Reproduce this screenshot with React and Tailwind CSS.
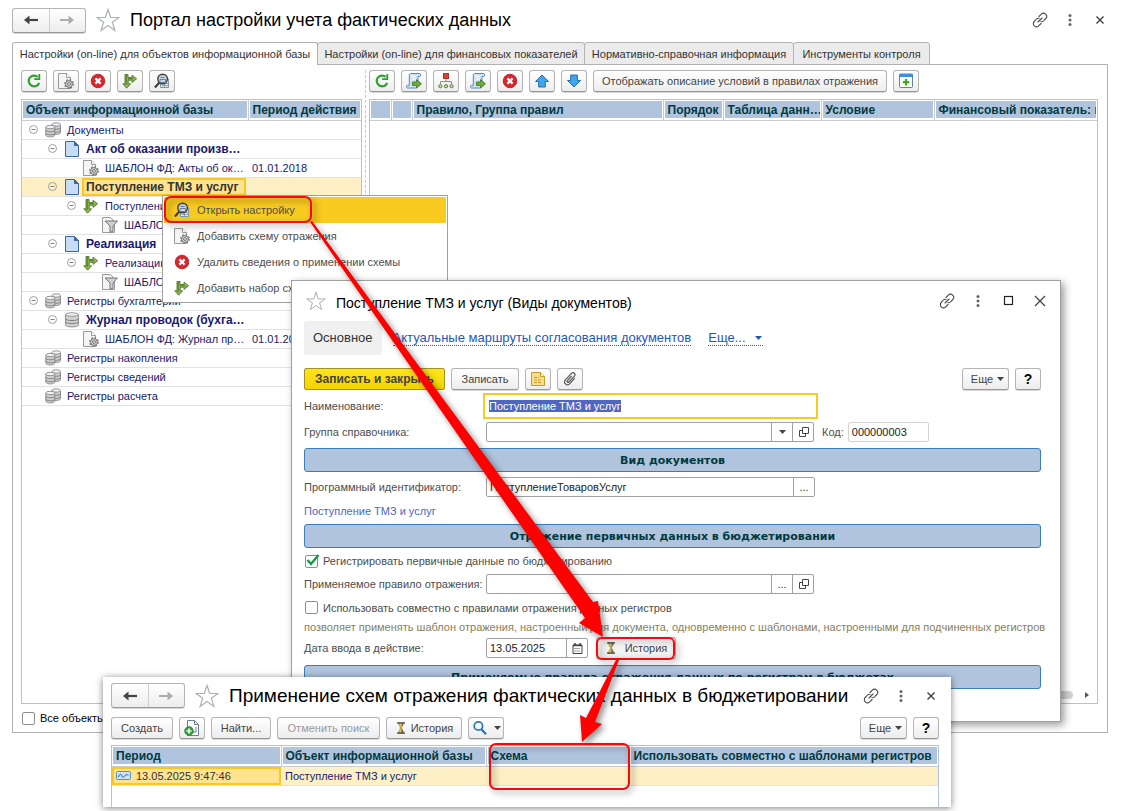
import { useEffect, useRef } from "react";
import clsx from "clsx";

// ---------- icons ----------

function Icon({ size = 16, children, className }) {
  return (
    <svg
      width={size}
      height={size}
      viewBox="0 0 16 16"
      fill="none"
      aria-hidden="true"
      className={clsx("shrink-0", className)}
    >
      {children}
    </svg>
  );
}

const RefreshIcon = () => (
  <Icon>
    <path d="M13.2 9.8A5.400 5.400 0 1 1 11.600 3.800" stroke="#2fa02f" strokeWidth="2.200" />
    <path d="M14.200 1v6H8.200V5.200h4.200V1z" fill="#2fa02f" />
  </Icon>
);

const PageGearIcon = () => (
  <Icon>
    <path d="M.5.5h8l4 4v11H.5z" fill="#f4f4f4" stroke="#9a9a9a" />
    <path d="M8.5.5v4h4" fill="#fff" stroke="#9a9a9a" />
    <circle cx="11" cy="11" r="4.2" stroke="#6f6f6f" strokeWidth="1.4" strokeDasharray="1.700 1.600" />
    <circle cx="11" cy="11" r="3.4" fill="#d8d8d8" stroke="#777" />
    <circle cx="11" cy="11" r="1.4" fill="#fff" stroke="#6f6f6f" />
  </Icon>
);

const DeleteIcon = () => (
  <Icon>
    <circle cx="8" cy="8" r="6.8" fill="#d8262c" stroke="#b0161c" strokeWidth=".8" />
    <path d="M5.4 5.4l5.2 5.2M10.6 5.4l-5.2 5.2" stroke="#fff" strokeWidth="2.2" />
  </Icon>
);

const BranchIcon = () => (
  <Icon>
    <path
      d="M3 1.5h3v3h4V2.2l4.6 3.6L10 9.4V7.2H6.2v3.6h2.4L4.6 15.2.8 10.8H3z"
      fill="#8fb356"
      stroke="#4f7a26"
      strokeWidth=".9"
      strokeLinejoin="round"
    />
    <path d="M4.2 1v11M6 5.8h5" stroke="#4f7a26" />
  </Icon>
);

const LensPageIcon = () => (
  <Icon>
    <path d="M8 6h6.5v8.5H6.5V12z" fill="#dfe7f0" stroke="#8393a6" />
    <path d="M8 10.500h6M8 12.500h6M10.500 9v5" stroke="#8393a6" strokeWidth=".8" />
    <circle cx="8.6" cy="6" r="4.8" fill="#c6d6e6" stroke="#3e3e3e" strokeWidth="1.4" />
    <path d="M6 6.500h5.500v3h-5.500zM6.500 4.500h4" stroke="#6d8196" />
    <path d="M5.4 9.4L.9 14.4" stroke="#3e3e3e" strokeWidth="2.2" />
  </Icon>
);

const ScrollIcon = () => (
  <Icon>
    <path d="M4.5.5h9c1.6 0 1.6 3 0 3H12V12c0 2-1.2 3-2.500 3H1.5c-1.6 0-1.6-2.6 0-2.6h1.8V2.2C3.3 1.2 3.8.5 4.5.5z" fill="#cfe3f8" stroke="#5d87b5" />
    <path d="M5.6 3.500h4.6M5.6 6h4.6" stroke="#fff" strokeWidth="1.2" />
    <path d="M6.500 9h4V6.6l5 4.2-5 4.200v-2.600h-4z" fill="#6fab3c" stroke="#3b7418" strokeWidth=".8" />
  </Icon>
);

const TreeIcon = () => (
  <Icon>
    <path d="M8 5v4M2.5 11V8.6h11V11" stroke="#8a8a8a" />
    <rect x="5.400" y=".6" width="5.200" height="4.800" fill="#d8432c" stroke="#9a2114" strokeWidth=".8" />
    <circle cx="2.4" cy="13.2" r="1.6" fill="#d7e8bd" stroke="#4f7a26" />
    <circle cx="8" cy="13.2" r="1.6" fill="#d7e8bd" stroke="#4f7a26" />
    <circle cx="13.6" cy="13.2" r="1.6" fill="#d7e8bd" stroke="#4f7a26" />
  </Icon>
);

const UpIcon = () => (
  <Icon>
    <path d="M8 2l6.5 6.5h-3.2V14H4.7V8.5H1.5z" fill="#3ea6ea" stroke="#2271ad" strokeLinejoin="round" />
  </Icon>
);

const DownIcon = () => (
  <Icon>
    <path d="M8 14l6.5-6.5h-3.2V2H4.7v5.5H1.5z" fill="#3ea6ea" stroke="#2271ad" strokeLinejoin="round" />
  </Icon>
);

const AddPanelIcon = () => (
  <Icon>
    <rect x="1.5" y="1" width="13" height="13.5" rx="1" fill="#fff" stroke="#6c7f94" />
    <path d="M1 1h14v3H1z" fill="#3f8fdc" />
    <path d="M8 6v6.4M4.8 9.2h6.4" stroke="#3fae16" strokeWidth="2.2" />
  </Icon>
);

const PageIcon = () => (
  <Icon>
    <path d="M1.5.5h9l4 4v11h-13z" fill="#c7dcf5" stroke="#3b67a5" />
    <path d="M10.5.5v4h4z" fill="#3b67a5" stroke="#3b67a5" />
  </Icon>
);

const Cylinder = ({ x, y, w, h }) => (
  <g stroke="#8a8a8a" strokeWidth=".9">
    <path d={`M${x} ${y + 2}v${h - 4}c0 2.6 ${w} 2.6 ${w} 0v${4 - h}`} fill="#cfcfcf" />
    <path d={`M${x} ${y + h / 2 - 1}c0 2.4 ${w} 2.4 ${w} 0M${x} ${y + h / 2 + 2}c0 2.4 ${w} 2.4 ${w} 0`} stroke="#777" />
    <ellipse cx={x + w / 2} cy={y + 2} rx={w / 2} ry="1.7" fill="#f2f2f2" />
  </g>
);

const StackIcon = () => (
  <Icon>
    <Cylinder x={7} y={0.5} w={8.5} h={12} />
    <Cylinder x={0.8} y={3} w={9} h={12} />
  </Icon>
);

const DatabaseIcon = () => (
  <Icon>
    <Cylinder x={1.5} y={0.5} w={13} h={14.5} />
  </Icon>
);

const FilterPageIcon = () => (
  <Icon>
    <path d="M.5.5h8l4 4v11H.5z" fill="#f4f4f4" stroke="#9a9a9a" />
    <path d="M3 4h12.5L11 9v5.4l-3 .8V9z" fill="#cfcfcf" stroke="#777" strokeLinejoin="round" />
  </Icon>
);

const NoteIcon = () => (
  <Icon>
    <path d="M1.500 1.500h9l4 4v9h-13z" fill="#f9dd8a" stroke="#c79a2c" />
    <path d="M10.500 1.500v4h4" fill="#fff3c8" stroke="#c79a2c" />
    <path d="M4 6.500h5M4 9h8M4 11.500h8" stroke="#c79a2c" strokeDasharray="3 1" />
  </Icon>
);

const ClipIcon = () => (
  <Icon>
    <path
      d="M12.8 7.2l-5.2 5.6a2.9 2.9 0 0 1-4.2-4l6-6.4a2 2 0 0 1 3 2.8L6.9 11a1 1 0 0 1-1.5-1.4l4.2-4.6"
      stroke="#5a5a5a"
      strokeWidth="1.2"
    />
  </Icon>
);

const HourglassIcon = ({ className }) => (
  <Icon size={12} className={className}>
    <path d="M3 1.2h10M3 14.8h10" stroke="#333" strokeWidth="2" />
    <path d="M4.500 2h7L8.600 8l2.900 6h-7l2.900-6z" fill="#f0c020" stroke="#6d6d6d" strokeWidth=".7" />
    <path d="M9 8l2.600 6H8.400zM11.400 2L9 7V2z" fill="#56616b" />
  </Icon>
);

const SearchIcon = () => (
  <Icon>
    <circle cx="6.4" cy="6" r="4.2" stroke="#2f78b7" strokeWidth="1.8" />
    <path d="M9.4 9.2l4.6 5" stroke="#2f78b7" strokeWidth="2.4" />
  </Icon>
);

const NewPageIcon = () => (
  <Icon>
    <path d="M3.5.5h7l4 4v11h-11z" fill="#fff" stroke="#6c7f94" />
    <path d="M10.5.5v4h4M9 12h3V7" stroke="#6c7f94" />
    <circle cx="5" cy="11" r="4.4" fill="#2fa03a" stroke="#1c7d28" strokeWidth=".6" />
    <path d="M5 8.5v5M2.5 11h5" stroke="#fff" strokeWidth="1.6" />
  </Icon>
);

const RecordIcon = () => (
  <svg width="15" height="9" viewBox="0 0 15 9" fill="none" aria-hidden="true" className="shrink-0">
    <rect x=".5" y=".5" width="14" height="8" rx="1" fill="#cfe3f7" stroke="#5b8dc0" />
    <path d="M2.500 6c1-3.500 2.500-3.500 3.500-1s2 1 3-.5 2-.5 3.500-.5" stroke="#1f5aa0" />
  </svg>
);

const StarIcon = ({ size = 24 }) => (
  <svg width={size} height={size} viewBox="0 0 24 24" fill="none" aria-hidden="true" className="shrink-0">
    <path
      d="M12 1.500l2.700 8h8.300l-6.700 4.800 2.600 8.100L12 17.500l-6.900 4.900 2.600-8.100L1 9.500h8.300z"
      stroke="#a9b1ba"
      strokeWidth="1.200"
    />
  </svg>
);

const LinkIcon = () => (
  <Icon>
    <g stroke="#4a4a4a" strokeWidth="1.100" strokeLinecap="round">
      <path d="M7 4.500l2.300-2.300a3 3 0 0 1 4.500 4.300L11.500 9a2.600 2.600 0 0 1-2.600.7" />
      <path d="M9 11.500l-2.300 2.300a3 3 0 0 1-4.500-4.300L4.500 7a2.600 2.600 0 0 1 2.600-.7" />
      <path d="M6 10l4-4" />
    </g>
  </Icon>
);

const DotsIcon = () => (
  <Icon>
    <g fill="#666">
      <circle cx="8" cy="3.500" r="1.500" />
      <circle cx="8" cy="8" r="1.500" />
      <circle cx="8" cy="12.500" r="1.500" />
    </g>
  </Icon>
);

const CloseIcon = ({ big }) => (
  <Icon>
    <path
      d={big ? "M3 3l10 10M13 3L3 13" : "M4.500 4.500l7 7M11.500 4.500l-7 7"}
      stroke="#3f3f3f"
      strokeWidth={big ? 1.2 : 1.4}
    />
  </Icon>
);

const MaximizeIcon = () => (
  <Icon>
    <rect x="3.500" y="3.500" width="8" height="8" stroke="#222" strokeWidth="1.200" />
  </Icon>
);

const OpenIcon = () => (
  <svg width="11" height="11" viewBox="0 0 11 11" fill="none" aria-hidden="true">
    <path d="M4.500.5h6v6h-6zM4.500 3.500h-3v6h6v-3" stroke="#444" />
  </svg>
);

const CalendarIcon = () => (
  <svg width="11" height="11" viewBox="0 0 11 11" fill="none" aria-hidden="true">
    <path d="M1 2h9v8.500H1z" stroke="#444" />
    <path d="M1 2.500h9M3 0v2M8 0v2" stroke="#444" strokeWidth="1.500" />
    <path d="M2.500 5.500h6M2.500 8h6" stroke="#444" strokeDasharray="1 1" />
  </svg>
);

const Caret = ({ className = "text-[#444]" }) => (
  <svg width="7" height="4" viewBox="0 0 7 4" aria-hidden="true" className={className}>
    <path d="M0 0h7L3.500 4z" fill="currentColor" />
  </svg>
);

// ---------- shared controls ----------

function Button({ children, className, label, disabled }) {
  return (
    <button
      type="button"
      aria-label={label}
      disabled={disabled}
      className={clsx(
        "flex h-[22px] shrink-0 items-center justify-center rounded-[3px] border border-[#b4b4b4] border-b-[#989898] bg-linear-to-b from-white to-[#ededed] whitespace-nowrap shadow-[0_1px_0_#d8d8d8]",
        disabled ? "text-[#9a9a9a]" : "text-[#444]",
        className
      )}
    >
      {children}
    </button>
  );
}

const IconButton = ({ label, children, className }) => (
  <Button label={label} className={clsx("w-[26px]", className)}>
    {children}
  </Button>
);

function NavButtons() {
  return (
    <div className="flex h-[25px] w-[74px] shrink-0 rounded-[3px] border border-[#b4b4b4] border-b-[#989898] bg-linear-to-b from-white to-[#ededed] shadow-[0_1px_0_#d8d8d8]">
      <button type="button" aria-label="Назад" className="flex flex-1 items-center justify-center border-r border-[#cfcfcf]">
        <Icon>
          <path d="M15 8H4" stroke="#444" strokeWidth="2.200" />
          <path d="M1 8l5.500-4.500v9z" fill="#444" />
        </Icon>
      </button>
      <button type="button" aria-label="Вперед" className="flex flex-1 items-center justify-center">
        <Icon>
          <path d="M1 8h11" stroke="#adadad" strokeWidth="2" />
          <path d="M15 8L9.500 3.500v9z" fill="#adadad" />
        </Icon>
      </button>
    </div>
  );
}

function WindowButtons({ maximize }) {
  return (
    <div className={clsx("ml-auto flex shrink-0", maximize ? "gap-[15px]" : "gap-[14px]")}>
      <button type="button" aria-label="Ссылка"><LinkIcon /></button>
      <button type="button" aria-label="Меню окна"><DotsIcon /></button>
      {maximize && <button type="button" aria-label="Развернуть"><MaximizeIcon /></button>}
      <button type="button" aria-label="Закрыть"><CloseIcon big={maximize} /></button>
    </div>
  );
}

function Checkbox({ id, label, checked }) {
  return (
    <div className="flex items-center gap-[5px] pl-px">
      <span className="relative flex">
        <input
          id={id}
          type="checkbox"
          defaultChecked={checked}
          className="peer size-[13px] appearance-none rounded-[2px] border border-[#8e8e8e] bg-white"
        />
        <svg
          width="14"
          height="13"
          viewBox="0 0 14 13"
          fill="none"
          aria-hidden="true"
          className="pointer-events-none absolute -top-px left-px hidden peer-checked:block"
        >
          <path d="M1.500 6l3.500 4 7.500-9" stroke="#119a49" strokeWidth="2.400" />
        </svg>
      </span>
      <label htmlFor={id} className="whitespace-nowrap">{label}</label>
    </div>
  );
}

function Field({ id, value = "", className, children }) {
  return (
    <div className={clsx("flex h-5 rounded-[2px] border border-[#a0a0a0] bg-white", className)}>
      <input id={id} defaultValue={value} className="w-0 min-w-0 flex-1 px-[3px] text-[#222] outline-none" />
      {children}
    </div>
  );
}

const FieldButton = ({ label, children }) => (
  <button
    type="button"
    aria-label={label}
    className="flex w-[21px] shrink-0 items-center justify-center border-l border-[#a0a0a0] text-[#333]"
  >
    {children}
  </button>
);

const Section = ({ children, className }) => (
  <h3
    className={clsx(
      "flex h-6 items-center justify-center rounded-[3px] border border-[#3c7ebb] bg-[#b0c4de] pt-0.5 font-['DejaVu_Sans'] text-[11px] font-bold whitespace-nowrap text-[#003a3f]",
      className
    )}
  >
    {children}
  </h3>
);

const HeadCell = ({ children }) => (
  <th className="border-r border-b border-[#c8ccd2] p-px font-bold last:border-r-0">
    <div className="h-[17px] overflow-hidden bg-[#b0c4de] pl-[3px] text-left text-[12px] leading-[18px] whitespace-nowrap text-[#003a3f]">
      {children}
    </div>
  </th>
);

// ---------- main window ----------

const tabs = [
  { text: "Настройки (on-line) для объектов информационной базы", width: "w-[306px]" },
  { text: "Настройки (on-line) для финансовых показателей", width: "w-[268px]" },
  { text: "Нормативно-справочная информация", width: "w-[210px]" },
  { text: "Инструменты контроля", width: "w-[137px]" },
];

const rows = [
  { indent: "pl-1.5", icon: <StackIcon />, text: "Документы", open: true },
  { indent: "pl-[25px]", icon: <PageIcon />, text: "Акт об оказании произв…", open: true, bold: true },
  { indent: "pl-[44px]", icon: <PageGearIcon />, text: "ШАБЛОН ФД: Акты об ок…", date: "01.01.2018" },
  { indent: "pl-[25px]", icon: <PageIcon />, text: "Поступление ТМЗ и услуг", open: true, bold: true, selected: true },
  { indent: "pl-[44px]", icon: <BranchIcon />, text: "Поступление", open: true },
  { indent: "pl-[63px]", icon: <FilterPageIcon />, text: "ШАБЛОН" },
  { indent: "pl-[25px]", icon: <PageIcon />, text: "Реализация", open: true, bold: true },
  { indent: "pl-[44px]", icon: <BranchIcon />, text: "Реализации", open: true },
  { indent: "pl-[63px]", icon: <FilterPageIcon />, text: "ШАБЛОН" },
  { indent: "pl-1.5", icon: <StackIcon />, text: "Регистры бухгалтерии", open: true },
  { indent: "pl-[25px]", icon: <DatabaseIcon />, text: "Журнал проводок (бухга…", open: true, bold: true },
  { indent: "pl-[44px]", icon: <PageGearIcon />, text: "ШАБЛОН ФД: Журнал пр…", date: "01.01.2018" },
  { indent: "pl-1.5", icon: <StackIcon />, text: "Регистры накопления" },
  { indent: "pl-1.5", icon: <StackIcon />, text: "Регистры сведений" },
  { indent: "pl-1.5", icon: <StackIcon />, text: "Регистры расчета" },
];

function TreeRow({ row }) {
  return (
    <tr className={clsx("h-[19px] border-b border-[#e2e2e2]", row.selected && "bg-[#fdf0c4]")}>
      <td className="p-0">
        <div className={clsx("flex h-[18px] items-center", row.indent)}>
          <span className="flex w-[17px] shrink-0">
            {row.open && (
              <button type="button" aria-label="Свернуть">
                <svg width="11" height="11" viewBox="0 0 11 11" fill="none" aria-hidden="true">
                  <circle cx="5.500" cy="5.500" r="4" stroke="#a0a0a0" />
                  <path d="M3.500 5.500h4" stroke="#808080" />
                </svg>
              </button>
            )}
          </span>
          {row.icon}
          <span
            className={clsx(
              "ml-0.5 min-w-0 flex-1 border-2 pl-0.5 leading-[14px] whitespace-nowrap",
              row.bold && "text-[12px] font-bold",
              row.selected
                ? "mr-0.5 border-[#f9c623] bg-[#ffe38e] text-[#333]"
                : "border-r-0 border-transparent text-[#191970]"
            )}
          >
            {row.text}
          </span>
        </div>
      </td>
      <td className="p-0 pl-1 text-[#191970]">{row.date}</td>
    </tr>
  );
}

function LeftPane() {
  return (
    <div className="flex w-[341px] shrink-0 flex-col">
      <div className="flex gap-1.5">
        <IconButton label="Обновить"><RefreshIcon /></IconButton>
        <IconButton label="Добавить схему"><PageGearIcon /></IconButton>
        <IconButton label="Удалить"><DeleteIcon /></IconButton>
        <IconButton label="Добавить набор"><BranchIcon /></IconButton>
        <IconButton label="Открыть настройку"><LensPageIcon /></IconButton>
      </div>
      <div className="mt-[7px] flex-1 border border-[#b0c4de]">
        <table className="w-full table-fixed border-collapse">
          <colgroup>
            <col />
            <col className="w-[113px]" />
          </colgroup>
          <thead>
            <tr className="h-5">
              <HeadCell>Объект информационной базы</HeadCell>
              <HeadCell>Период действия</HeadCell>
            </tr>
          </thead>
          <tbody>
            {rows.map((row, i) => (
              <TreeRow key={i} row={row} />
            ))}
          </tbody>
        </table>
      </div>
      <div className="flex h-7 items-center">
        <Checkbox id="all-objects" label="Все объекты" />
      </div>
    </div>
  );
}

function RightPane() {
  return (
    <div className="flex min-w-0 flex-1 flex-col">
      <div className="flex gap-1.5">
        <IconButton label="Обновить правила"><RefreshIcon /></IconButton>
        <IconButton label="Добавить правило"><ScrollIcon /></IconButton>
        <IconButton label="Добавить группу"><TreeIcon /></IconButton>
        <IconButton label="Скопировать правило"><ScrollIcon /></IconButton>
        <IconButton label="Удалить правило"><DeleteIcon /></IconButton>
        <IconButton label="Вверх"><UpIcon /></IconButton>
        <IconButton label="Вниз"><DownIcon /></IconButton>
        <Button className="w-[294px]">Отображать описание условий в правилах отражения</Button>
        <IconButton label="Показать панель" className="from-[#dcdcdc] to-[#ececec]"><AddPanelIcon /></IconButton>
      </div>
      <div className="mt-[7px] flex flex-1 flex-col border border-[#b0c4de]">
        <table className="w-full table-fixed border-collapse">
          <colgroup>
            <col className="w-[21px]" />
            <col className="w-[21px]" />
            <col className="w-[251px]" />
            <col className="w-[60px]" />
            <col className="w-[98px]" />
            <col className="w-[113px]" />
            <col />
          </colgroup>
          <thead>
            <tr className="h-5">
              <HeadCell />
              <HeadCell />
              <HeadCell>Правило, Группа правил</HeadCell>
              <HeadCell>Порядок</HeadCell>
              <HeadCell>Таблица данн…</HeadCell>
              <HeadCell>Условие</HeadCell>
              <HeadCell>Финансовый показатель: н</HeadCell>
            </tr>
          </thead>
        </table>
        <div className="mt-auto flex h-4 items-center justify-end gap-3 pr-2">
          <div className="h-2 w-64 rounded-full bg-[#d4d4d4]" />
          <svg width="4" height="6" viewBox="0 0 4 6" aria-hidden="true">
            <path d="M0 0l4 3-4 3z" fill="#555" />
          </svg>
        </div>
      </div>
      <div className="h-7" />
    </div>
  );
}

function MainWindow() {
  return (
    <main className="flex min-h-screen flex-col pr-[17px] pb-[78px] pl-3">
      <header className="flex h-[42px] items-center pb-0.5">
        <NavButtons />
        <div className="ml-2.5 flex">
          <StarIcon />
        </div>
        <h1 className="ml-2.5 text-[18px] whitespace-nowrap text-black">Портал настройки учета фактических данных</h1>
        <WindowButtons />
      </header>
      <nav className="flex">
        {tabs.map((tab, i) => (
          <button
            key={tab.text}
            type="button"
            className={clsx(
              "-mr-px flex h-[23px] items-center justify-center rounded-t-[3px] border border-[#b2b2b2] whitespace-nowrap text-[#333]",
              tab.width,
              i === 0 ? "z-10 -mb-px h-6 border-b-0 bg-white" : "bg-[#ebebeb]"
            )}
          >
            {tab.text}
          </button>
        ))}
      </nav>
      <div className="-mt-px flex flex-1 border border-[#b2b2b2] pt-[5px] pr-[9px] pl-2">
        <LeftPane />
        <div className="mx-[3px] w-px border-l border-dashed border-[#c8c8c8]" />
        <RightPane />
      </div>
    </main>
  );
}

// ---------- context menu ----------

const menuItems = [
  { icon: <LensPageIcon />, text: "Открыть настройку", active: true },
  { icon: <PageGearIcon />, text: "Добавить схему отражения" },
  { icon: <DeleteIcon />, text: "Удалить сведения о применении схемы" },
  { icon: <BranchIcon />, text: "Добавить набор схем" },
];

function ContextMenu() {
  return (
    <div role="menu" className="absolute top-[195px] left-[162px] flex w-[286px] flex-col border border-[#a0a0a0] bg-white p-px">
      {menuItems.map((item) => (
        <button
          key={item.text}
          type="button"
          role="menuitem"
          className={clsx("flex h-[26px] items-center gap-[7px] pl-2.5 text-[#4d4d4d]", item.active && "bg-[#f9ca20]")}
        >
          {item.icon}
          {item.text}
        </button>
      ))}
    </div>
  );
}

// ---------- document type dialog ----------

function DocumentDialog() {
  const nameRef = useRef(null);

  useEffect(() => {
    nameRef.current.focus();
    nameRef.current.select();
  }, []);

  return (
    <section className="absolute top-[280px] left-[291px] w-[770px] border border-[#a0a0a0] bg-white pr-[19px] pb-8 pl-3 text-[#4d4d4d] shadow-[3px_3px_8px_rgba(0,0,0,0.4)]">
      <header className="flex h-10 items-center">
        <div className="ml-0.5 flex">
          <StarIcon size={20} />
        </div>
        <h2 className="ml-2.5 pt-1 text-[14px] whitespace-nowrap text-black">Поступление ТМЗ и услуг (Виды документов)</h2>
        <div className="-mr-[7px] ml-auto flex">
          <WindowButtons maximize />
        </div>
      </header>

      <nav className="flex h-[34px] items-center text-[13px]">
        <button type="button" className="h-full rounded-[3px] bg-[#f0f0f0] px-[9px] text-[#333]">Основное</button>
        <a href="#routes" className="ml-[11px] border-b border-dotted border-[#1f57b8] leading-[15px] whitespace-nowrap text-[#1f57b8]">
          Актуальные маршруты согласования документов
        </a>
        <a href="#more" className="ml-[17px] flex items-center gap-2 border-b border-dotted border-[#1f57b8] leading-[15px] text-[#1f57b8]">
          Еще... <Caret className="w-[9px] text-[#1f57b8]" />
        </a>
      </nav>

      <div className="mt-[13px] flex gap-1.5">
        <button
          type="button"
          className="h-[22px] w-[141px] rounded-[2px] border border-[#a39320] bg-linear-to-b from-[#ffe41a] to-[#f3d400] text-[12px] font-bold whitespace-nowrap text-[#444]"
        >
          Записать и закрыть
        </button>
        <Button className="w-[68px]">Записать</Button>
        <IconButton label="Заметки"><NoteIcon /></IconButton>
        <IconButton label="Файлы"><ClipIcon /></IconButton>
        <Button className="ml-auto w-[47px] gap-1 pl-1">
          Еще <Caret />
        </Button>
        <Button className="w-[26px] text-[14px] font-bold text-black">?</Button>
      </div>

      <div className="mt-[3px] flex items-center">
        <label htmlFor="name" className="w-[179px]">Наименование:</label>
        <input
          id="name"
          ref={nameRef}
          defaultValue="Поступление ТМЗ и услуг"
          className="h-[26px] w-[335px] border-2 border-[#f9ca20] px-1 text-[#222] outline-none selection:bg-[#4f66c2] selection:text-white"
        />
      </div>

      <div className="mt-[3px] flex items-center">
        <label htmlFor="group" className="w-[182px]">Группа справочника:</label>
        <Field id="group" className="w-[328px]">
          <FieldButton label="Выбрать группу"><Caret /></FieldButton>
          <FieldButton label="Открыть группу"><OpenIcon /></FieldButton>
        </Field>
        <label htmlFor="code" className="mr-1 ml-2">Код:</label>
        <Field id="code" value="000000003" className="w-[81px] border-[#d2d2d2]" />
      </div>

      <Section className="mt-1.5">Вид документов</Section>

      <div className="mt-[5px] flex items-center">
        <label htmlFor="ident" className="w-[182px]">Программный идентификатор:</label>
        <Field id="ident" value="ПоступлениеТоваровУслуг" className="w-[329px]">
          <FieldButton label="Выбрать идентификатор">...</FieldButton>
        </Field>
      </div>
      <div className="flex h-[27px] items-center">
        <a href="#type" className="text-[#4b66c4]">Поступление ТМЗ и услуг</a>
      </div>

      <Section>Отражение первичных данных в бюджетировании</Section>

      <div className="flex h-[26px] items-center">
        <Checkbox id="register" label="Регистрировать первичные данные по бюджетированию" checked />
      </div>
      <div className="flex items-center">
        <label htmlFor="rule" className="w-[182px] whitespace-nowrap">Применяемое правило отражения:</label>
        <Field id="rule" className="w-[328px]">
          <FieldButton label="Выбрать правило">...</FieldButton>
          <FieldButton label="Открыть правило"><OpenIcon /></FieldButton>
        </Field>
      </div>
      <div className="flex h-[27px] items-center">
        <Checkbox id="shared" label="Использовать совместно с правилами отражения данных регистров" />
      </div>
      <p className="h-4 leading-3 whitespace-nowrap text-[#87805c]">
        позволяет применять шаблон отражения, настроенный для документа, одновременно с шаблонами, настроенными для подчиненных регистров
      </p>
      <div className="flex items-center">
        <label htmlFor="date" className="w-[182px]">Дата ввода в действие:</label>
        <Field id="date" value="13.05.2025" className="w-[102px]">
          <FieldButton label="Календарь"><CalendarIcon /></FieldButton>
        </Field>
        <Button className="ml-2 w-[80px] gap-2">
          <HourglassIcon /> История
        </Button>
      </div>

      <Section className="mt-1.5">Применяемые правила отражения данных по регистрам в бюджетах</Section>
    </section>
  );
}

// ---------- scheme history window ----------

function HistoryWindow() {
  return (
    <section className="absolute top-[677px] left-[103px] w-[848px] bg-white pt-1.5 pr-3 pl-2 shadow-[0_1px_7px_rgba(0,0,0,0.5)]">
      <header className="flex h-[25px] items-center">
        <NavButtons />
        <div className="ml-2.5 flex">
          <StarIcon />
        </div>
        <h2 className="ml-2.5 text-[19px] whitespace-nowrap text-black">
          Применение схем отражения фактических данных в бюджетировании
        </h2>
        <WindowButtons />
      </header>
      <div className="mt-[9px] flex gap-1.5">
        <Button className="w-[62px]">Создать</Button>
        <IconButton label="Создать копированием"><NewPageIcon /></IconButton>
        <Button className="w-[60px]">Найти...</Button>
        <Button className="w-[103px]" disabled>Отменить поиск</Button>
        <Button className="w-[76px] gap-1">
          <HourglassIcon /> История
        </Button>
        <Button label="Поиск" className="w-9 gap-1.5">
          <SearchIcon /> <Caret />
        </Button>
        <Button className="ml-auto w-[47px] gap-1 pl-1">
          Еще <Caret />
        </Button>
        <Button className="w-[26px] text-[14px] font-bold text-black">?</Button>
      </div>
      <div className="mt-1.5 border border-b-0 border-[#b0c4de] pb-[21px]">
        <table className="w-full table-fixed border-collapse">
          <colgroup>
            <col className="w-[169px]" />
            <col className="w-[205px]" />
            <col className="w-[143px]" />
            <col />
          </colgroup>
          <thead>
            <tr className="h-5">
              <HeadCell>Период</HeadCell>
              <HeadCell>Объект информационной базы</HeadCell>
              <HeadCell>Схема</HeadCell>
              <HeadCell>Использовать совместно с шаблонами регистров</HeadCell>
            </tr>
          </thead>
          <tbody>
            <tr className="h-[19px] border-b border-[#e2e2e2] bg-[#fdf0c4] text-[#191970]">
              <td className="p-0">
                <div className="flex h-[18px] items-center gap-[5px] border-2 border-[#f9c623] bg-[#ffe38e] pl-0.5 text-[#333]">
                  <RecordIcon /> 13.05.2025 9:47:46
                </div>
              </td>
              <td className="p-0 pl-1">Поступление ТМЗ и услуг</td>
              <td className="p-0" />
              <td className="p-0" />
            </tr>
          </tbody>
        </table>
      </div>
    </section>
  );
}

// red frames and arrows that lead the reader through the steps
function Callouts() {
  return (
    <svg className="pointer-events-none absolute inset-0 h-full w-full drop-shadow-[3px_3px_3px_rgba(0,0,0,0.45)]" aria-hidden="true">
      <g fill="none" stroke="#f40a0a" strokeWidth="2">
        <rect x="165" y="197" width="146" height="25" rx="6" />
        <rect x="597" y="638" width="77" height="21" rx="5" />
        <rect x="490" y="744" width="139" height="45" rx="6" />
      </g>
      <g fill="#fe0000">
        <path d="M310 222l2-1L593 602l5-1 5 36-24-14 6-5z" />
        <path d="M616 660h3L595 722l7 2-20 18-2-27 6 3z" />
      </g>
    </svg>
  );
}

export default function App() {
  return (
    <div className="relative overflow-hidden bg-white font-['Liberation_Sans',sans-serif] text-[11px] leading-[14px]">
      <MainWindow />
      <ContextMenu />
      <DocumentDialog />
      <HistoryWindow />
      <Callouts />
    </div>
  );
}
